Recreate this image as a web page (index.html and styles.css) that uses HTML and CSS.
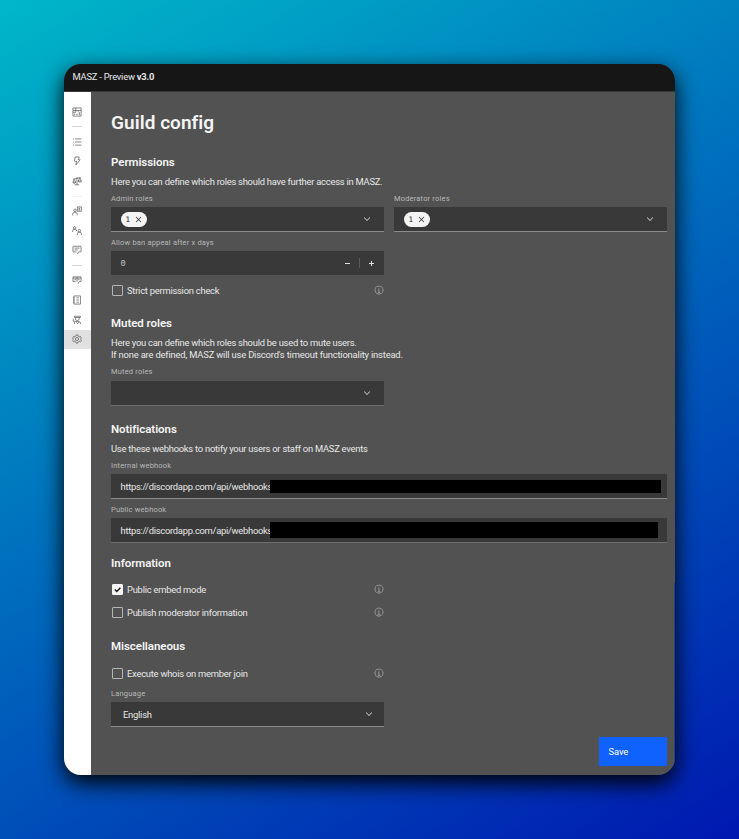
FILE: index.html
```html
<!DOCTYPE html>
<html lang="en">
<head>
<meta charset="utf-8">
<title>MASZ - Guild config</title>
<link rel="stylesheet" href="styles.css">
</head>
<body>
<svg class="defs" width="0" height="0">
  <symbol id="chevron" viewBox="0 0 16 16"><path d="M8 11 3 6l.7-.7L8 9.6l4.300-4.300L13 6z"/></symbol>
  <symbol id="info" viewBox="0 0 32 32"><path d="M17 22v-8h-4v2h2v6h-3v2h8v-2zM16 8a1.500 1.500 0 1 0 0 3 1.500 1.500 0 0 0 0-3zM16 30a14 14 0 1 1 0-28 14 14 0 0 1 0 28zm0-26a12 12 0 1 0 0 24 12 12 0 0 0 0-24z"/></symbol>
  <symbol id="close" viewBox="0 0 32 32"><path d="M24 9.400 22.600 8 16 14.600 9.400 8 8 9.400l6.600 6.600L8 22.600 9.400 24l6.600-6.600 6.600 6.600 1.400-1.400-6.600-6.600z"/></symbol>
</svg>
<div class="window">
  <header class="topbar">MASZ - Preview&nbsp;<b>v3.0</b></header>
  <div class="body">
    <nav class="sidebar">
      <a class="item"><svg viewBox="0 0 32 32"><path d="M3 3h26v26H3zM3 11h26M12 3v8M20 11v6M12 11v6H3M24 17v8M19 21v4M14 22v3M8 21v4"/></svg></a>
      <hr>
      <a class="item"><svg viewBox="0 0 32 32"><path d="M10 6h20M10 16h20M10 26h20M3 6h3M3 16h3M3 26h3"/></svg></a>
      <a class="item"><svg viewBox="0 0 32 32"><path d="M10 3h13l-3 9h6L12 29l3-12H8z"/></svg></a>
      <a class="item"><svg viewBox="0 0 32 32"><path d="M16 3v25M9 28h14M4 10l24-5M7 10 3 20h9zM25 6l-5 10h10zM3 20c1 5 8 5 9 0M20 16c1 5 9 5 10 0"/></svg></a>
      <hr class="faint">
      <a class="item"><svg viewBox="0 0 32 32"><path d="M2 30v-4a5 5 0 0 1 5-5h5a5 5 0 0 1 5 5v4M17 3h13v14H17zM21 7h5M23 7v6M21 13h5"/><circle cx="9.500" cy="14" r="4"/></svg></a>
      <a class="item"><svg viewBox="0 0 32 32"><path d="M2 19v-3a5 5 0 0 1 5-5h3a5 5 0 0 1 5 5M17 29v-4a5 5 0 0 1 5-5h3a5 5 0 0 1 5 5v4"/><circle cx="8.500" cy="6" r="4"/><circle cx="23.500" cy="15" r="4"/></svg></a>
      <a class="item"><svg viewBox="0 0 32 32"><path d="m17 29 4-7h6a2 2 0 0 0 2-2V6a2 2 0 0 0-2-2H5a2 2 0 0 0-2 2v14a2 2 0 0 0 2 2h9M8 10h16M8 16h10"/></svg></a>
      <hr>
      <a class="item"><svg viewBox="0 0 32 32"><path d="M12 21H3V6h26v15h-6l-4 7M3 10h26M8 15h5M18 15h6M16 6v15"/></svg></a>
      <a class="item"><svg viewBox="0 0 32 32"><path d="M6 3h21v26H6zM3 9h6M3 16h6M3 23h6M14 9h8M14 16h8M14 23h8"/></svg></a>
      <a class="item"><svg viewBox="0 0 32 32"><path d="M8 4h19v4H8zM11 8v4a6 6 0 0 0 12 0V8M4 12v8h6M8 29v-4a4 4 0 0 1 4-4h10a5 5 0 0 1 5 5v3M14 23l4 5 4-5"/></svg></a>
      <a class="item active"><svg viewBox="0 0 32 32"><path d="m13 3-1 4-3 2-4-1-3 5 3 3-3 4 3 5 4-2 3 2 1 4h6l1-4 3-2 4 2 3-5-3-4 3-3-3-5-4 1-3-2-1-4z"/><circle cx="16" cy="16" r="5"/></svg></a>
    </nav>
    <main class="content">
      <h1>Guild config</h1>

      <section class="permissions">
        <h2>Permissions</h2>
        <p>Here you can define which roles should have further access in MASZ.</p>
        <div class="columns">
          <div>
            <label>Admin roles</label>
            <div class="field"><span class="tag">1<svg><use href="#close"/></svg></span><svg class="chev"><use href="#chevron"/></svg></div>
          </div>
          <div>
            <label>Moderator roles</label>
            <div class="field"><span class="tag">1<svg><use href="#close"/></svg></span><svg class="chev"><use href="#chevron"/></svg></div>
          </div>
        </div>
        <div class="half">
          <label>Allow ban appeal after x days</label>
          <div class="field number"><span class="value">0</span><i class="minus"></i><i class="rule"></i><i class="plus"></i></div>
          <div class="check"><i class="box"></i><span>Strict permission check</span><svg class="info"><use href="#info"/></svg></div>
        </div>
      </section>

      <section class="muted">
        <h2>Muted roles</h2>
        <p>Here you can define which roles should be used to mute users.<br><span class="line">If none are defined, MASZ will use Discord's timeout functionality instead.</span></p>
        <div class="half">
          <label>Muted roles</label>
          <div class="field dim"><svg class="chev"><use href="#chevron"/></svg></div>
        </div>
      </section>

      <section class="notifications">
        <h2>Notifications</h2>
        <p>Use these webhooks to notify your users or staff on MASZ events</p>
        <label>Internal webhook</label>
        <div class="field url"><span>https://discordapp.com/api/webhooks</span><i class="redact"></i></div>
        <label>Public webhook</label>
        <div class="field url second dim"><span>https://discordapp.com/api/webhooks</span><i class="redact"></i></div>
      </section>

      <section class="information half">
        <h2>Information</h2>
        <div class="check"><i class="box checked"><svg viewBox="0 0 10 10"><path d="m2 5 2.200 2.200L8.200 3"/></svg></i><span>Public embed mode</span><svg class="info"><use href="#info"/></svg></div>
        <div class="check"><i class="box"></i><span>Publish moderator information</span><svg class="info"><use href="#info"/></svg></div>
      </section>

      <section class="misc half">
        <h2>Miscellaneous</h2>
        <div class="check"><i class="box"></i><span>Execute whois on member join</span><svg class="info"><use href="#info"/></svg></div>
        <label>Language</label>
        <div class="field select"><span>English</span><svg class="chev"><use href="#chevron"/></svg></div>
      </section>

      <button class="save">Save</button>
    </main>
  </div>
</div>
</body>
</html>
```
FILE: styles.css
```css
* { box-sizing: border-box; }
body {
  margin: 0;
  width: 739px;
  height: 839px;
  overflow: hidden;
  padding: 64px;
  background: linear-gradient(150deg, #00b7c8 0%, #0018b0 100%);
  font: 9.400px/12px Roboto, "Liberation Sans", sans-serif;
  letter-spacing: -0.240px;
  color: #e8e8e8;
}
.defs { position: absolute; }
svg { display: block; fill: currentColor; }
.window {
  position: relative;
  width: 611px;
  height: 711px;
  border-radius: 17px;
  overflow: hidden;
  background: #525252;
}
body::before {
  content: "";
  position: absolute;
  left: 64px;
  top: 64px;
  width: 611px;
  height: 711px;
  border-radius: 17px;
  box-shadow: 0 8px 22px 0 #000;
}
.window::after {
  content: "";
  position: absolute;
  right: 0;
  top: 519px;
  bottom: 0;
  width: 1px;
  background: #1c438a;
}
.topbar {
  height: 28px;
  padding: 7px 9px 0 8.500px;
  background: #161616;
  border-bottom: 1px solid #393939;
}
.topbar b { font-weight: 700; }
.body { display: flex; height: 683px; }
.sidebar {
  width: 27px;
  padding-top: 10px;
  background: #fff;
}
.item {
  display: flex;
  height: 19.650px;
  padding-left: 7.500px;
  align-items: center;
  color: #525252;
}
.item svg { width: 10px; height: 10px; fill: none; stroke: currentColor; stroke-width: 2.200; }
.item.active { background: #e0e0e0; }
.sidebar hr { width: 10px; height: 1px; margin: 4.700px 7.500px; border: 0; background: #d5d5d5; }
.sidebar hr.faint { background: #f0f0f0; }
.content {
  display: flex;
  flex-direction: column;
  flex: 1;
  padding: 17px 8px 0 20px;
  white-space: nowrap;
}
h1 { margin: 0; font-size: 19px; line-height: 28px; font-weight: 600; letter-spacing: 0.050px; color: #f4f4f4; }
h2 { margin: 0; font-size: 11.500px; line-height: 14px; font-weight: 600; letter-spacing: -0.050px; color: #f4f4f4; }
p { margin: 7px 0 0; }
.line { letter-spacing: -0.180px; }
section { padding-top: 18px; }
.muted { padding-top: 19px; }
.notifications { padding-top: 16px; }
.information { padding-top: 13px; }
.misc { padding-top: 20px; }
.half { width: 273px; }
.columns { display: grid; grid-template-columns: 273px 273px; gap: 10px; }
label {
  display: block;
  margin: 5px 0 2px;
  font-size: 7.500px;
  line-height: 12px;
  letter-spacing: 0.180px;
  color: #b8b8b8;
}
.field {
  display: flex;
  align-items: center;
  height: 25px;
  padding: 0 12px 0 9.500px;
  background: #393939;
  border-bottom: 1px solid #8d8d8d;
}
.muted .half label { margin-bottom: 3px; }
.field.dim { border-color: #6f6f6f; }
.field.number { border-color: #525252; padding-right: 10px; }
.chev { width: 10px; height: 10px; margin-left: auto; }
.tag {
  display: flex;
  align-items: center;
  width: 26px;
  height: 15px;
  padding-left: 5px;
  border-radius: 8px;
  background: #f4f4f4;
  color: #262626;
  font: 7.500px/15px "DejaVu Sans", sans-serif;
}
.tag svg { width: 11px; height: 11px; margin-left: 3px; }
.value { padding-top: 1px; font: 8.700px/12px "Liberation Mono", monospace; flex: 1; color: #c6c6c6; }
.minus, .plus { position: relative; width: 5px; height: 1px; background: #e0e0e0; }
.plus::after { content: ""; position: absolute; left: 2px; top: -2px; width: 1px; height: 5px; background: #e0e0e0; }
.rule { width: 1px; height: 10px; margin: 0 9px; background: #5a5a5a; }
.check { display: flex; align-items: center; height: 12px; margin-top: 9px; }
.box { width: 11px; height: 11px; margin: -1px 4px 0 1px; border: 1px solid #b4b4b4; border-radius: 1px; }
.box.checked { background: #f4f4f4; border-color: #f4f4f4; }
.box svg { width: 9px; height: 9px; fill: none; stroke: #161616; stroke-width: 1.500; }
.info { width: 10px; height: 10px; margin: -2px 0 0 auto; color: #c6c6c6; }
.information .check { margin-top: 14px; }
.information .check + .check { margin-top: 11px; }
.misc .check { margin-top: 15px; }
.misc label { margin-top: 8px; }
.url { padding-right: 6px; }
.url span { width: 149.500px; padding-top: 1px; letter-spacing: -0.270px; }
.redact { position: relative; flex: 1; height: 13px; background: #000; }
.second .redact { height: 16px; margin-right: 3px; top: -0.500px; }
.select { padding: 0 10px 0 12px; }
.select span { padding-top: 1px; }
.save {
  align-self: flex-end;
  width: 68px;
  height: 29px;
  margin-top: 10px;
  padding: 0 9.500px;
  border: 0;
  background: #0f62fe;
  color: #fff;
  font: inherit;
  letter-spacing: -0.100px;
  text-align: left;
}
```
